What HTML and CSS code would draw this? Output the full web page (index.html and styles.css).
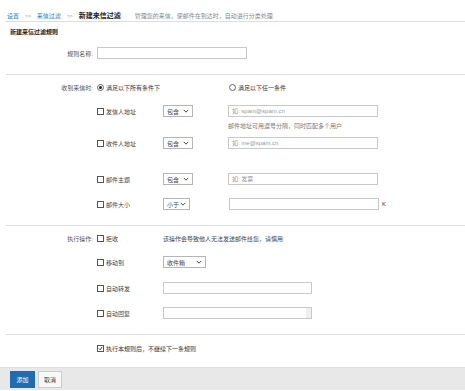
FILE: index.html
```html
<!DOCTYPE html>
<html lang="zh-CN">
<head>
    <meta charset="UTF-8">
    <title>新建来信过滤</title>
    <link rel="stylesheet" href="styles.css">
</head>
<body>
    <div class="page">
        <div class="crumbs">
            <a href="#">设置</a>
            <span class="sep">&gt;&gt;</span>
            <a href="#">来信过滤</a>
            <span class="sep">&gt;&gt;</span>
            <span class="current">新建来信过滤</span>
            <span class="desc">管理您的来信，使邮件在到达时，自动进行分类处理</span>
        </div>

        <div class="sect sect-name">
            <div class="sect-title">新建来信过滤规则</div>
            <div class="row">
                <span class="label">规则名称:</span>
                <span class="input w-name"></span>
            </div>
        </div>

        <div class="sect sect-cond">
            <div class="row">
                <span class="label">收到来信时:</span>
                <div class="radios">
                    <span class="radio-item"><span class="radio on"></span>满足以下所有条件下</span>
                    <span class="radio-item"><span class="radio"></span>满足以下任一条件</span>
                </div>
            </div>
            <div class="row r-from">
                <span></span>
                <div class="cond">
                    <span class="chk"><span class="box"></span>发信人地址</span>
                    <span class="select w-op">包含<svg viewBox="0 0 8 5"><path d="M1 1l3 3 3-3"/></svg></span>
                    <span class="input w-val ph">如: spam@spam.cn</span>
                </div>
            </div>
            <div class="row hint-row">
                <span></span>
                <span class="hint">邮件地址可用逗号分隔，同时匹配多个用户</span>
            </div>
            <div class="row r-to">
                <span></span>
                <div class="cond">
                    <span class="chk"><span class="box"></span>收件人地址</span>
                    <span class="select w-op">包含<svg viewBox="0 0 8 5"><path d="M1 1l3 3 3-3"/></svg></span>
                    <span class="input w-val ph">如: me@spam.cn</span>
                </div>
            </div>
            <div class="row r-subj">
                <span></span>
                <div class="cond">
                    <span class="chk"><span class="box"></span>邮件主题</span>
                    <span class="select w-op">包含<svg viewBox="0 0 8 5"><path d="M1 1l3 3 3-3"/></svg></span>
                    <span class="input w-val ph">如: 发票</span>
                </div>
            </div>
            <div class="row r-size">
                <span></span>
                <div class="cond">
                    <span class="chk"><span class="box"></span>邮件大小</span>
                    <span class="select w-lt">小于<svg viewBox="0 0 8 5"><path d="M1 1l3 3 3-3"/></svg></span>
                    <span class="input w-val"></span>
                    <span class="unit">K</span>
                </div>
            </div>
        </div>

        <div class="sect sect-act">
            <div class="row">
                <span class="label">执行操作:</span>
                <div class="cond">
                    <span class="chk"><span class="box"></span>拒收</span>
                    <span class="warn">该操作会导致他人无法发送邮件给您，请慎用</span>
                </div>
            </div>
            <div class="row r-move">
                <span></span>
                <div class="cond">
                    <span class="chk"><span class="box"></span>移动到</span>
                    <span class="select w-box">收件箱<svg viewBox="0 0 8 5"><path d="M1 1l3 3 3-3"/></svg></span>
                </div>
            </div>
            <div class="row r-fwd">
                <span></span>
                <div class="cond">
                    <span class="chk"><span class="box"></span>自动转发</span>
                    <span class="input w-act"></span>
                </div>
            </div>
            <div class="row r-reply">
                <span></span>
                <div class="cond">
                    <span class="chk"><span class="box"></span>自动回复</span>
                    <span class="input w-act area"><span class="scroll"></span></span>
                </div>
            </div>
        </div>

        <div class="sect sect-end">
            <div class="row">
                <span></span>
                <span class="chk"><span class="box checked"><svg viewBox="0 0 8 8"><path d="M1.5 4l2 2 3-4.5"/></svg></span>执行本规则后，不继续下一条规则</span>
            </div>
        </div>
    </div>

    <div class="footer">
        <button class="btn primary">添加</button>
        <button class="btn">取消</button>
    </div>
</body>
</html>
```

FILE: styles.css
```css
body {
    margin: 0;
    font-family: "Liberation Sans", "Noto Sans CJK SC", sans-serif;
    font-size: 6px;
    color: #444;
    background: #fff;
    width: 465px;
    height: 391px;
    overflow: hidden;
}

.page {
    margin-left: 6px;
}

.crumbs {
    height: 22px;
    border-bottom: 1px solid #ddd;
    box-sizing: border-box;
    padding: 10px 0 0 1px;
    display: flex;
    align-items: center;
    line-height: 8px;
}

.crumbs a {
    color: #2f7cc3;
    text-decoration: none;
}

.crumbs .sep {
    color: #999;
    margin: 0 6px;
    font-size: 5px;
}

.crumbs .current {
    font-size: 7px;
    font-weight: bold;
    color: #222;
}

.crumbs .desc {
    margin-left: 14px;
    color: #888;
}

.sect {
    border-bottom: 1px solid #ddd;
    padding-bottom: 15px;
}

.sect-title {
    height: 20px;
    line-height: 20px;
    padding-left: 4px;
    font-weight: bold;
    color: #222;
}

.row {
    display: grid;
    grid-template-columns: 87px 1fr;
    column-gap: 4px;
    height: 12px;
    align-items: center;
}

.label {
    text-align: right;
    color: #555;
}

.sect-name .row { margin-top: 5px; }
.sect-cond .row:first-child { margin-top: 6px; }
.sect-cond .r-from { margin-top: 12px; }
.sect-cond .hint-row { margin-top: 5px; height: 8px; }
.sect-cond .r-to { margin-top: 7px; }
.sect-cond .r-subj { margin-top: 24px; }
.sect-cond .r-size { margin-top: 13px; }
.sect-act .row:first-child { margin-top: 6px; }
.sect-act .r-move { margin-top: 12px; }
.sect-act .r-fwd { margin-top: 14px; }
.sect-act .r-reply { margin-top: 13px; }
.sect-end { border-bottom: none; padding-bottom: 0; }
.sect-end .row { margin-top: 7px; }

.input {
    display: block;
    height: 12px;
    box-sizing: border-box;
    border: 1px solid #c8c8c8;
    background: #fff;
    padding-left: 3px;
    line-height: 10px;
    position: relative;
}

.input.ph {
    color: #999;
}

.w-name { width: 150px; }
.w-val { width: 150px; }
.w-act { width: 149px; }

.area .scroll {
    position: absolute;
    right: 0;
    top: 0;
    width: 5px;
    height: 10px;
    background: #eee;
}

.radios {
    display: flex;
    align-items: center;
}

.radio-item {
    display: flex;
    align-items: center;
    width: 132px;
    color: #333;
}

.radio {
    width: 5px;
    height: 5px;
    border: 1px solid #666;
    border-radius: 50%;
    margin-right: 2px;
    position: relative;
}

.radio.on::after {
    content: "";
    position: absolute;
    left: 1px;
    top: 1px;
    width: 3px;
    height: 3px;
    border-radius: 50%;
    background: #222;
}

.cond {
    display: flex;
    align-items: center;
}

.chk {
    display: flex;
    align-items: center;
    width: 66px;
    color: #444;
}

.sect-end .chk {
    width: auto;
    color: #333;
}

.box {
    width: 5px;
    height: 5px;
    border: 1px solid #555;
    margin-right: 2px;
    flex-shrink: 0;
}

.box svg {
    display: block;
    width: 5px;
    height: 5px;
}

.box svg path {
    fill: none;
    stroke: #222;
    stroke-width: 1.4;
}

.select {
    display: flex;
    align-items: center;
    justify-content: space-between;
    height: 12px;
    box-sizing: border-box;
    border: 1px solid #b5b5b5;
    padding: 0 3px;
    color: #444;
    margin-right: 35px;
}

.select svg {
    width: 6px;
    height: 4px;
}

.select svg path {
    fill: none;
    stroke: #333;
    stroke-width: 1.2;
}

.w-op { width: 30px; }
.w-lt { width: 27px; margin-right: 39px; }
.w-box { width: 43px; }

.hint {
    padding-left: 131px;
    color: #777;
    line-height: 8px;
}

.unit {
    margin-left: 3px;
    color: #333;
}

.warn {
    color: #444;
}

.footer {
    margin-top: 13px;
    height: 23px;
    background: #e8e8e8;
    border-top: 1px solid #ddd;
    box-sizing: border-box;
    display: flex;
    align-items: center;
    padding-left: 10px;
    gap: 3px;
}

.btn {
    height: 17px;
    padding: 0 5px;
    font: inherit;
    border: 1px solid #ccc;
    background: #f8f8f8;
    color: #444;
}

.btn.primary {
    width: 25px;
    background: #1d6db4;
    border-color: #1d6db4;
    color: #fff;
}
```
